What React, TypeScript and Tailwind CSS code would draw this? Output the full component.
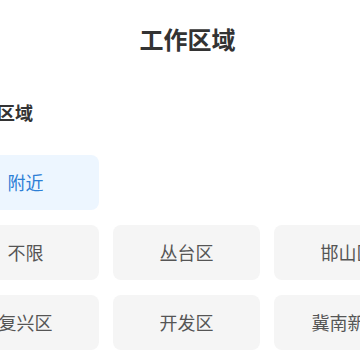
import React from "react";

const rows: { label: string; active?: boolean }[][] = [
  [{ label: "附近", active: true }],
  [{ label: "不限" }, { label: "丛台区" }, { label: "邯山区" }],
  [{ label: "复兴区" }, { label: "开发区" }, { label: "冀南新区" }],
];

export default function App() {
  return (
    <div
      className="w-[360px] h-[360px] overflow-hidden bg-white"
      style={{ fontFamily: '"Noto Sans CJK SC", "Noto Sans", sans-serif' }}
    >
      <div className="-ml-[48px] w-[471px] shrink-0">
        <div className="pt-[25px] text-center text-[24px] leading-[28px] font-bold text-[#333333]">
          工作区域
        </div>
        <div className="mt-[45px] pl-[9px] text-[18px] leading-[28px] font-bold text-[#333333]">
          工作区域
        </div>
        <div className="mt-[29px] flex flex-col gap-[15px]">
          {rows.map((row, i) => (
            <div key={i} className="flex gap-[14px]">
              {row.map((c) => (
                <div
                  key={c.label}
                  className={
                    c.active
                      ? "w-[147px] h-[55px] shrink-0 rounded-[8px] bg-[#edf6ff] text-[#2d7fd6] flex items-center justify-center text-[18px]"
                      : "w-[147px] h-[55px] shrink-0 rounded-[8px] bg-[#f5f5f5] text-[#555555] flex items-center justify-center text-[18px]"
                  }
                >
                  {c.label}
                </div>
              ))}
            </div>
          ))}
        </div>
      </div>
    </div>
  );
}
